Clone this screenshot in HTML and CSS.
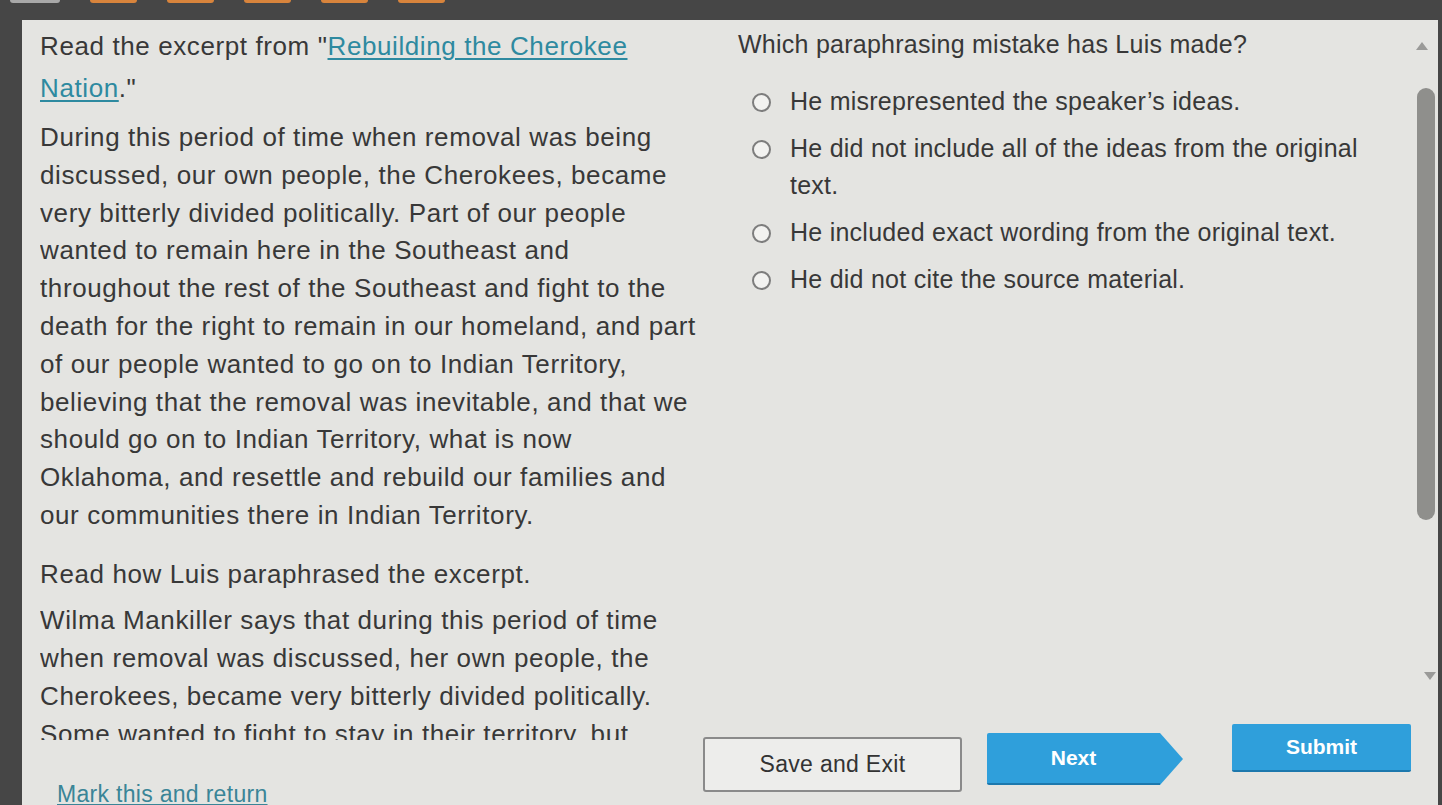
FILE: index.html
```html
<!DOCTYPE html>
<html lang="en">
<head>
<meta charset="utf-8">
<title>Paraphrasing question</title>
<link rel="stylesheet" href="styles.css">
</head>
<body>
<div class="topbar">
  <span class="tab tab-gray"></span>
  <span class="tab"></span>
  <span class="tab"></span>
  <span class="tab"></span>
  <span class="tab"></span>
  <span class="tab"></span>
</div>
<div class="panel">
  <div class="left-col">
    <div class="passage">
      <p class="intro">Read the excerpt from "<a class="src-link" href="#">Rebuilding the Cherokee<br>Nation</a>."</p>
      <p class="excerpt">During this period of time when removal was being<br>discussed, our own people, the Cherokees, became<br>very bitterly divided politically. Part of our people<br>wanted to remain here in the Southeast and<br>throughout the rest of the Southeast and fight to the<br>death for the right to remain in our homeland, and part<br>of our people wanted to go on to Indian Territory,<br>believing that the removal was inevitable, and that we<br>should go on to Indian Territory, what is now<br>Oklahoma, and resettle and rebuild our families and<br>our communities there in Indian Territory.</p>
      <p class="read-how">Read how Luis paraphrased the excerpt.</p>
      <p class="para">Wilma Mankiller says that during this period of time<br>when removal was discussed, her own people, the<br>Cherokees, became very bitterly divided politically.<br>Some wanted to fight to stay in their territory, but</p>
    </div>
    <a class="mark-link" href="#">Mark this and return</a>
  </div>
  <div class="right-col">
    <div class="question-pane">
      <div class="question">
        <p class="prompt">Which paraphrasing mistake has Luis made?</p>
        <ul class="options">
          <li class="option"><span class="radio"></span><span class="opt-text">He misrepresented the speaker’s ideas.</span></li>
          <li class="option"><span class="radio"></span><span class="opt-text">He did not include all of the ideas from the original<br>text.</span></li>
          <li class="option"><span class="radio"></span><span class="opt-text">He included exact wording from the original text.</span></li>
          <li class="option"><span class="radio"></span><span class="opt-text">He did not cite the source material.</span></li>
        </ul>
      </div>
      <div class="scrollbar">
        <span class="arrow-up"></span>
        <span class="thumb"></span>
        <span class="arrow-down"></span>
      </div>
    </div>
    <div class="actions">
      <button class="btn btn-save">Save and Exit</button>
      <button class="btn btn-next">Next<span class="next-tip"></span></button>
      <button class="btn btn-submit">Submit</button>
    </div>
  </div>
</div>
</body>
</html>
```
FILE: styles.css
```css
html, body {
  margin: 0;
  padding: 0;
}
body {
  width: 1442px;
  height: 805px;
  overflow: hidden;
  background: #464646;
  font-family: "Liberation Sans", Arial, sans-serif;
  color: #383838;
}
.topbar {
  height: 20px;
  display: flex;
  gap: 30px;
  padding-left: 10px;
  align-items: flex-start;
}
.tab {
  display: block;
  width: 47px;
  height: 3px;
  background: #d8843c;
  border-radius: 0 0 3px 3px;
}
.tab-gray {
  width: 50px;
  background: #a8a8a8;
}
.panel {
  margin-left: 22px;
  margin-right: 4px;
  height: 785px;
  background: #e4e4e1;
  display: flex;
  overflow: hidden;
}
.left-col {
  width: 678px;
  padding-left: 18px;
  display: flex;
  flex-direction: column;
}
.passage {
  flex: none;
  height: 720px;
  overflow: hidden;
  font-size: 26px;
  letter-spacing: 0.6px;
  line-height: 38px;
}
.passage p {
  margin: 0;
}
.intro {
  padding-top: 5px;
  line-height: 42px;
}
.src-link {
  color: #2e8aa0;
  text-decoration: underline;
  text-decoration-thickness: 2px;
  text-underline-offset: 3px;
}
.excerpt {
  margin-top: 10px !important;
  line-height: 37.8px;
}
.read-how {
  margin-top: 20px !important;
}
.para {
  margin-top: 8px !important;
}
.mark-link {
  flex: none;
  margin-top: 40px;
  font-size: 23px;
  line-height: 28px;
  letter-spacing: 0.3px;
  color: #3a8597;
  text-decoration: underline;
  text-underline-offset: 2px;
  padding-left: 17px;
  align-self: flex-start;
}
.right-col {
  flex: 1;
  display: flex;
  flex-direction: column;
}
.question-pane {
  flex: none;
  height: 704px;
  display: flex;
}
.question {
  flex: 1;
  padding-left: 20px;
  padding-top: 5px;
  font-size: 25px;
  letter-spacing: 0.25px;
}
.prompt {
  margin: 0;
  line-height: 38px;
}
.options {
  list-style: none;
  margin: 20px 0 0;
  padding: 0 0 0 14px;
  display: flex;
  flex-direction: column;
  gap: 10px;
}
.option {
  display: flex;
  align-items: flex-start;
  line-height: 37px;
}
.radio {
  flex: none;
  width: 15px;
  height: 15px;
  margin-top: 10px;
  margin-right: 19px;
  border: 2px solid #7d7d7d;
  border-radius: 50%;
  background: #f2f2f0;
}
.opt-text {
  display: block;
}
.scrollbar {
  width: 24px;
  margin-right: 0;
  padding-top: 22px;
  display: flex;
  flex-direction: column;
  align-items: center;
}
.arrow-up {
  width: 0;
  height: 0;
  margin-right: 8px;
  border-left: 6px solid transparent;
  border-right: 6px solid transparent;
  border-bottom: 8px solid #9a9a98;
}
.thumb {
  display: block;
  margin-top: 38px;
  width: 18px;
  height: 432px;
  background: #8f8f8c;
  border-radius: 9px;
}
.arrow-down {
  margin-top: 152px;
  margin-left: 8px;
  width: 0;
  height: 0;
  border-left: 6px solid transparent;
  border-right: 6px solid transparent;
  border-top: 8px solid #9a9a98;
}
.actions {
  display: flex;
  align-items: flex-start;
  margin-left: -15px;
}
.btn {
  font-family: "Liberation Sans", Arial, sans-serif;
  font-size: 21px;
  cursor: pointer;
}
.btn-save {
  margin-top: 13px;
  width: 259px;
  height: 55px;
  background: #ededeb;
  color: #333;
  font-size: 23px;
  letter-spacing: 0.3px;
  border: 2px solid #8a8a8a;
  border-radius: 3px;
}
.btn-next {
  position: relative;
  margin-top: 9px;
  margin-left: 25px;
  width: 173px;
  height: 52px;
  background: #2f9fdb;
  color: #fff;
  font-weight: bold;
  border: none;
  border-bottom: 2px solid #1c78ad;
  border-radius: 2px 0 0 2px;
}
.next-tip {
  position: absolute;
  top: 0;
  right: -23px;
  width: 0;
  height: 0;
  border-top: 26px solid transparent;
  border-bottom: 26px solid transparent;
  border-left: 23px solid #2f9fdb;
}
.btn-submit {
  margin-left: 72px;
  width: 179px;
  height: 48px;
  background: #2f9fdb;
  color: #fff;
  font-weight: bold;
  border: none;
  border-bottom: 2px solid #1c78ad;
  border-radius: 2px;
}
```
